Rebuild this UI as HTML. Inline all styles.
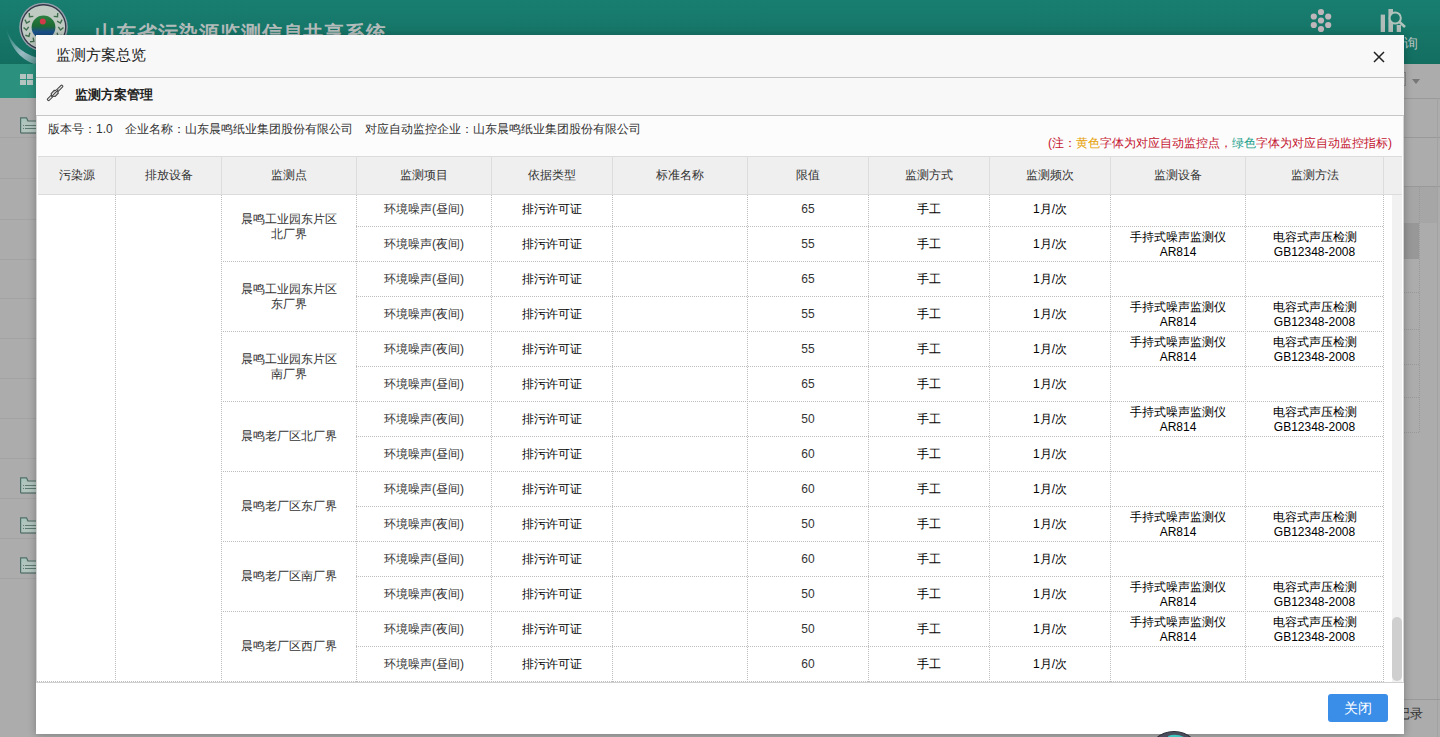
<!DOCTYPE html><html><head><meta charset="utf-8"><style>
*{margin:0;padding:0;box-sizing:border-box}
html,body{width:1440px;height:737px;overflow:hidden;background:#acacac;font-family:"Liberation Sans",sans-serif}
.a{position:absolute}
.hd{left:0;top:0;width:1440px;height:64px;background:linear-gradient(#187e70,#136e60)}
.nav{left:0;top:64px;width:700px;height:34px;background:#2c907e}
.nav2{left:700px;top:64px;width:740px;height:34px;background:#acacac}
.bgc{left:0;top:98px;width:1440px;height:639px;background:#acacac}
.modal{left:36px;top:35px;width:1368px;height:699px;background:#fff;box-shadow:0 1px 8px rgba(0,0,0,.28);overflow:hidden}
.mh{left:0;top:0;width:1368px;height:43px;background:#f8f8f8;border-bottom:1px solid #c6c6c6}
.mt{left:20px;top:10px;font-size:15px;color:#222;line-height:20px}
.close{left:1337px;top:16px;width:12px;height:12px}
.ph{left:0;top:43px;width:1368px;height:38px;background:#f8f8f8;border-bottom:1px solid #c6c6c6}
.pt{left:39px;top:52px;font-size:13px;font-weight:bold;color:#222;line-height:16px}
.info{left:12px;top:86px;font-size:12px;color:#333;line-height:16px;white-space:pre}
.note{left:1012px;top:100px;font-size:12px;color:#c41430;line-height:16px;white-space:nowrap}
.th{top:121px;height:38px;background:#efefef}
.cell{font-size:12px;color:#333;text-align:center;line-height:15px;display:flex;align-items:center;justify-content:center}
.vl{width:1px;background:repeating-linear-gradient(to bottom,#bdbdbd 0,#bdbdbd 1px,transparent 1px,transparent 2px)}
.hl{height:1px;background:repeating-linear-gradient(to right,#bdbdbd 0,#bdbdbd 1px,transparent 1px,transparent 2px)}
.btn{left:1292px;top:659px;width:60px;height:28px;background:#3a8ee8;border-radius:3px;color:#fff;font-size:14px;line-height:28px;text-align:center}
</style></head><body>
<div class="a hd"></div><div class="a nav"></div><div class="a nav2"></div><div class="a bgc"></div>
<svg class="a" style="left:0;top:20px" width="80" height="50" viewBox="0 0 80 50"><defs><linearGradient id="sw" x1="0" y1="0" x2="1" y2="1"><stop offset="0" stop-color="#b8d8e8" stop-opacity="0"/><stop offset=".55" stop-color="#c8d4e4" stop-opacity=".75"/><stop offset="1" stop-color="#e0d8e8" stop-opacity=".2"/></linearGradient></defs><path d="M6 8 Q14 34 46 40 Q40 43 34 44 Q12 36 6 8Z" fill="url(#sw)"/></svg>
<svg class="a" style="left:17px;top:0px" width="54" height="54" viewBox="0 0 54 54"><defs><linearGradient id="lg" x1="0" y1="0" x2="0" y2="1"><stop offset="0" stop-color="#2a8040"/><stop offset=".45" stop-color="#1c6a34"/><stop offset=".7" stop-color="#1a508e"/><stop offset="1" stop-color="#154a60"/></linearGradient></defs><circle cx="26.5" cy="27" r="24.3" fill="#9aa2ac"/><circle cx="26.5" cy="27" r="22.9" fill="#34384a"/><circle cx="26.5" cy="27" r="21.6" fill="#bfcac3"/><path d="M-2.6 -1.6 L0 1.2 L2.6 -1.6" fill="none" stroke="#3f6f4c" stroke-width="1.4" transform="translate(22.02 43.71) rotate(285.0)"/><path d="M-2.6 -1.6 L0 1.2 L2.6 -1.6" fill="none" stroke="#3f6f4c" stroke-width="1.4" transform="translate(30.98 43.71) rotate(75.0)"/><path d="M-2.6 -1.6 L0 1.2 L2.6 -1.6" fill="none" stroke="#3f6f4c" stroke-width="1.4" transform="translate(15.85 40.63) rotate(308.0)"/><path d="M-2.6 -1.6 L0 1.2 L2.6 -1.6" fill="none" stroke="#3f6f4c" stroke-width="1.4" transform="translate(37.15 40.63) rotate(52.0)"/><path d="M-2.6 -1.6 L0 1.2 L2.6 -1.6" fill="none" stroke="#3f6f4c" stroke-width="1.4" transform="translate(11.37 35.39) rotate(331.0)"/><path d="M-2.6 -1.6 L0 1.2 L2.6 -1.6" fill="none" stroke="#3f6f4c" stroke-width="1.4" transform="translate(41.63 35.39) rotate(29.0)"/><path d="M-2.6 -1.6 L0 1.2 L2.6 -1.6" fill="none" stroke="#3f6f4c" stroke-width="1.4" transform="translate(9.29 28.81) rotate(354.0)"/><path d="M-2.6 -1.6 L0 1.2 L2.6 -1.6" fill="none" stroke="#3f6f4c" stroke-width="1.4" transform="translate(43.71 28.81) rotate(6.0)"/><path d="M-2.6 -1.6 L0 1.2 L2.6 -1.6" fill="none" stroke="#3f6f4c" stroke-width="1.4" transform="translate(9.96 21.94) rotate(377.0)"/><path d="M-2.6 -1.6 L0 1.2 L2.6 -1.6" fill="none" stroke="#3f6f4c" stroke-width="1.4" transform="translate(43.04 21.94) rotate(-17.0)"/><path d="M-2.6 -1.6 L0 1.2 L2.6 -1.6" fill="none" stroke="#3f6f4c" stroke-width="1.4" transform="translate(13.25 15.88) rotate(400.0)"/><path d="M-2.6 -1.6 L0 1.2 L2.6 -1.6" fill="none" stroke="#3f6f4c" stroke-width="1.4" transform="translate(39.75 15.88) rotate(-40.0)"/><circle cx="26.5" cy="27.3" r="11.9" fill="url(#lg)"/><circle cx="25.8" cy="21.6" r="3" fill="#d23a4a"/></svg>
<div class="a" style="left:95px;top:20px;font-size:20px;font-weight:bold;letter-spacing:0.85px;color:#b4bcbb;line-height:26px;white-space:nowrap">山东省污染源监测信息共享系统</div>
<svg class="a" style="left:1313px;top:3px;overflow:visible" width="20" height="32" viewBox="0 0 20 32"><circle cx="8" cy="9" r="3.1" fill="#beb6ba"/><circle cx="8" cy="17.5" r="3.1" fill="#beb6ba"/><circle cx="8" cy="26" r="3.1" fill="#beb6ba"/><circle cx="0.8" cy="13.5" r="3.1" fill="#beb6ba"/><circle cx="15.2" cy="13.5" r="3.1" fill="#beb6ba"/><circle cx="0.8" cy="22" r="3.1" fill="#beb6ba"/><circle cx="15.2" cy="22" r="3.1" fill="#beb6ba"/></svg>
<svg class="a" style="left:1380px;top:6px" width="30" height="30" viewBox="0 0 30 30"><rect x="0.7" y="8.6" width="4.3" height="17.4" fill="#b0bcb8"/><rect x="8.4" y="3" width="4.6" height="23" fill="#b0bcb8"/><rect x="16.7" y="19" width="4.3" height="7" fill="#b0bcb8"/><circle cx="15.2" cy="12" r="5.6" fill="#177668" stroke="#b0c4bc" stroke-width="2"/><path d="M19.5 16 L25 21" stroke="#b0c4bc" stroke-width="2.6"/></svg>
<div class="a" style="left:1390px;top:35px;font-size:14px;color:#b8c4c0;line-height:16px">查询</div>
<div class="a" style="left:20px;top:74px;width:6px;height:5px;background:#b4c4c0"></div><div class="a" style="left:27px;top:74px;width:6px;height:5px;background:#b4c4c0"></div><div class="a" style="left:20px;top:80px;width:6px;height:5px;background:#b4c4c0"></div><div class="a" style="left:27px;top:80px;width:6px;height:5px;background:#b4c4c0"></div>
<div class="a" style="left:0;top:137px;width:40px;height:1px;background:#a3a3a3"></div>
<div class="a" style="left:0;top:178px;width:40px;height:1px;background:#a3a3a3"></div>
<div class="a" style="left:0;top:219px;width:40px;height:1px;background:#a3a3a3"></div>
<div class="a" style="left:0;top:259px;width:40px;height:1px;background:#a3a3a3"></div>
<div class="a" style="left:0;top:298px;width:40px;height:1px;background:#a3a3a3"></div>
<div class="a" style="left:0;top:338px;width:40px;height:1px;background:#a3a3a3"></div>
<div class="a" style="left:0;top:378px;width:40px;height:1px;background:#a3a3a3"></div>
<div class="a" style="left:0;top:418px;width:40px;height:1px;background:#a3a3a3"></div>
<div class="a" style="left:0;top:458px;width:40px;height:1px;background:#a3a3a3"></div>
<div class="a" style="left:0;top:498px;width:40px;height:1px;background:#a3a3a3"></div>
<div class="a" style="left:0;top:538px;width:40px;height:1px;background:#a3a3a3"></div>
<div class="a" style="left:0;top:578px;width:40px;height:1px;background:#a3a3a3"></div>
<svg class="a" style="left:20px;top:117px" width="18" height="17" viewBox="0 0 18 17"><rect x="0.6" y="1" width="6" height="4" fill="#a8c6bc"/><rect x="0.6" y="4.5" width="17.4" height="11.5" fill="#b2c4be"/><path d="M0.6 16 V0.8 H6.5 L8 4 H18" fill="none" stroke="#4f7068" stroke-width="1.2"/><path d="M0.6 16 H18" stroke="#4f6a64" stroke-width="1.2"/><path d="M3 8.5 H4 M5 8.5 H16 M3 11.5 H4 M5 11.5 H16" stroke="#5c7a72" stroke-width="1"/></svg>
<svg class="a" style="left:20px;top:477px" width="18" height="17" viewBox="0 0 18 17"><rect x="0.6" y="1" width="6" height="4" fill="#a8c6bc"/><rect x="0.6" y="4.5" width="17.4" height="11.5" fill="#b2c4be"/><path d="M0.6 16 V0.8 H6.5 L8 4 H18" fill="none" stroke="#4f7068" stroke-width="1.2"/><path d="M0.6 16 H18" stroke="#4f6a64" stroke-width="1.2"/><path d="M3 8.5 H4 M5 8.5 H16 M3 11.5 H4 M5 11.5 H16" stroke="#5c7a72" stroke-width="1"/></svg>
<svg class="a" style="left:20px;top:517px" width="18" height="17" viewBox="0 0 18 17"><rect x="0.6" y="1" width="6" height="4" fill="#a8c6bc"/><rect x="0.6" y="4.5" width="17.4" height="11.5" fill="#b2c4be"/><path d="M0.6 16 V0.8 H6.5 L8 4 H18" fill="none" stroke="#4f7068" stroke-width="1.2"/><path d="M0.6 16 H18" stroke="#4f6a64" stroke-width="1.2"/><path d="M3 8.5 H4 M5 8.5 H16 M3 11.5 H4 M5 11.5 H16" stroke="#5c7a72" stroke-width="1"/></svg>
<svg class="a" style="left:20px;top:557px" width="18" height="17" viewBox="0 0 18 17"><rect x="0.6" y="1" width="6" height="4" fill="#a8c6bc"/><rect x="0.6" y="4.5" width="17.4" height="11.5" fill="#b2c4be"/><path d="M0.6 16 V0.8 H6.5 L8 4 H18" fill="none" stroke="#4f7068" stroke-width="1.2"/><path d="M0.6 16 H18" stroke="#4f6a64" stroke-width="1.2"/><path d="M3 8.5 H4 M5 8.5 H16 M3 11.5 H4 M5 11.5 H16" stroke="#5c7a72" stroke-width="1"/></svg>
<div class="a" style="left:1404px;top:98px;width:36px;height:1px;background:#999"></div>
<div class="a" style="left:1404px;top:137px;width:36px;height:1px;background:#999"></div>
<div class="a" style="left:1404px;top:186px;width:36px;height:1px;background:#999"></div>
<div class="a" style="left:1404px;top:187px;width:33px;height:36px;background:#a6a6a6"></div>
<div class="a" style="left:1404px;top:223px;width:15px;height:36px;background:#989898"></div>
<div class="a" style="left:1419px;top:187px;width:1px;height:245px;background:repeating-linear-gradient(#999 0 1px,transparent 1px 2px)"></div>
<div class="a" style="left:1404px;top:292px;width:16px;height:1px;background:repeating-linear-gradient(to right,#999 0 1px,transparent 1px 2px)"></div>
<div class="a" style="left:1404px;top:329px;width:16px;height:1px;background:repeating-linear-gradient(to right,#999 0 1px,transparent 1px 2px)"></div>
<div class="a" style="left:1404px;top:364px;width:16px;height:1px;background:repeating-linear-gradient(to right,#999 0 1px,transparent 1px 2px)"></div>
<div class="a" style="left:1404px;top:397px;width:16px;height:1px;background:repeating-linear-gradient(to right,#999 0 1px,transparent 1px 2px)"></div>
<div class="a" style="left:1404px;top:432px;width:16px;height:1px;background:repeating-linear-gradient(to right,#999 0 1px,transparent 1px 2px)"></div>
<div class="a" style="left:1437px;top:98px;width:1px;height:640px;background:#a2a2a2"></div>
<div class="a" style="left:1404px;top:72px;width:2px;height:14px;border:1px solid #888;border-left:none"></div>
<div class="a" style="left:1412px;top:79px;width:0;height:0;border-left:4px solid transparent;border-right:4px solid transparent;border-top:5px solid #777"></div>
<div class="a" style="left:1404px;top:699px;width:36px;height:1px;background:#999"></div>
<div class="a" style="left:1397px;top:706px;font-size:13px;color:#333;line-height:15px">记录</div>
<div class="a modal">
<div class="a mh"></div><div class="a mt">监测方案总览</div>
<svg class="a close" viewBox="0 0 12 12"><path d="M1 1L11 11M11 1L1 11" stroke="#222" stroke-width="1.5"/></svg>
<div class="a" style="left:0;top:81px;width:1368px;height:40px;background:#fcfcfc"></div>
<div class="a ph"></div><div class="a pt">监测方案管理</div>
<svg class="a" style="left:10px;top:49px" width="20" height="20" viewBox="0 0 20 20"><path d="M2.6 15.4 L15.6 2.4" stroke="#4a4a4a" stroke-width="3.4" stroke-linecap="round"/><path d="M2.6 15.4 L15.6 2.4" stroke="#e8e8e8" stroke-width="1.3" stroke-linecap="round" stroke-dasharray="1 1"/><path d="M5.2 9.6 L8.2 6.4 L11.6 6.6 L12.2 9.2 L9.2 12.4 L5.8 12.2Z" fill="#ddd" stroke="#4a4a4a" stroke-width="1.2"/><path d="M5.4 12.6 L12.4 5.6" stroke="#4a4a4a" stroke-width="1.1"/><path d="M6 11 L11 6" stroke="#f0f0f0" stroke-width=".8" stroke-dasharray="1 1"/></svg>
<div class="a info">版本号：1.0</div><div class="a info" style="left:89px">企业名称：山东晨鸣纸业集团股份有限公司</div><div class="a info" style="left:329px">对应自动监控企业：山东晨鸣纸业集团股份有限公司</div>
<div class="a note">(注：<span style="color:#e6a000">黄色</span>字体为对应自动监控点，<span style="color:#1aa08a">绿色</span>字体为对应自动监控指标)</div>
<div class="a th" style="left:2px;width:1364px;top:121px;height:39px;border-top:1px solid #dcdcdc;border-bottom:1px solid #dcdcdc"></div>
<div class="a cell" style="left:2px;width:77px;top:122px;height:37px">污染源</div>
<div class="a cell" style="left:80px;width:105px;top:122px;height:37px">排放设备</div>
<div class="a cell" style="left:186px;width:134px;top:122px;height:37px">监测点</div>
<div class="a cell" style="left:321px;width:134px;top:122px;height:37px">监测项目</div>
<div class="a cell" style="left:456px;width:120px;top:122px;height:37px">依据类型</div>
<div class="a cell" style="left:577px;width:134px;top:122px;height:37px">标准名称</div>
<div class="a cell" style="left:712px;width:120px;top:122px;height:37px">限值</div>
<div class="a cell" style="left:833px;width:120px;top:122px;height:37px">监测方式</div>
<div class="a cell" style="left:954px;width:120px;top:122px;height:37px">监测频次</div>
<div class="a cell" style="left:1075px;width:134px;top:122px;height:37px">监测设备</div>
<div class="a cell" style="left:1210px;width:137px;top:122px;height:37px">监测方法</div>
<div class="a" style="left:79px;top:122px;width:1px;height:37px;background:#dddddd"></div>
<div class="a" style="left:185px;top:122px;width:1px;height:37px;background:#dddddd"></div>
<div class="a" style="left:320px;top:122px;width:1px;height:37px;background:#dddddd"></div>
<div class="a" style="left:455px;top:122px;width:1px;height:37px;background:#dddddd"></div>
<div class="a" style="left:576px;top:122px;width:1px;height:37px;background:#dddddd"></div>
<div class="a" style="left:711px;top:122px;width:1px;height:37px;background:#dddddd"></div>
<div class="a" style="left:832px;top:122px;width:1px;height:37px;background:#dddddd"></div>
<div class="a" style="left:953px;top:122px;width:1px;height:37px;background:#dddddd"></div>
<div class="a" style="left:1074px;top:122px;width:1px;height:37px;background:#dddddd"></div>
<div class="a" style="left:1209px;top:122px;width:1px;height:37px;background:#dddddd"></div>
<div class="a" style="left:1347px;top:122px;width:1px;height:37px;background:#dddddd"></div>
<div class="a" style="left:1px;top:160px;width:1355px;height:487px;overflow:hidden">
<div class="a vl" style="left:78px;top:0;height:487px"></div>
<div class="a vl" style="left:184px;top:0;height:487px"></div>
<div class="a vl" style="left:319px;top:0;height:487px"></div>
<div class="a vl" style="left:454px;top:0;height:487px"></div>
<div class="a vl" style="left:575px;top:0;height:487px"></div>
<div class="a vl" style="left:710px;top:0;height:487px"></div>
<div class="a vl" style="left:831px;top:0;height:487px"></div>
<div class="a vl" style="left:952px;top:0;height:487px"></div>
<div class="a vl" style="left:1073px;top:0;height:487px"></div>
<div class="a vl" style="left:1208px;top:0;height:487px"></div>
<div class="a vl" style="left:1346px;top:0;height:487px"></div>
<div class="a hl" style="left:319px;top:31px;width:1027px"></div>
<div class="a cell" style="left:320px;width:134px;top:-3px;height:34px">环境噪声(昼间)</div>
<div class="a cell" style="color:#000;left:455px;width:120px;top:-3px;height:34px">排污许可证</div>
<div class="a cell" style="left:576px;width:134px;top:-3px;height:34px"></div>
<div class="a cell" style="left:711px;width:120px;top:-3px;height:34px">65</div>
<div class="a cell" style="color:#000;left:832px;width:120px;top:-3px;height:34px">手工</div>
<div class="a cell" style="color:#000;left:953px;width:120px;top:-3px;height:34px">1月/次</div>
<div class="a cell" style="color:#000;left:1074px;width:134px;top:-3px;height:34px"></div>
<div class="a cell" style="color:#000;left:1209px;width:137px;top:-3px;height:34px"></div>
<div class="a cell" style="left:185px;width:134px;top:-3px;height:69px">晨鸣工业园东片区<br>北厂界</div>
<div class="a hl" style="left:184px;top:66px;width:1162px"></div>
<div class="a cell" style="left:320px;width:134px;top:32px;height:34px">环境噪声(夜间)</div>
<div class="a cell" style="color:#000;left:455px;width:120px;top:32px;height:34px">排污许可证</div>
<div class="a cell" style="left:576px;width:134px;top:32px;height:34px"></div>
<div class="a cell" style="left:711px;width:120px;top:32px;height:34px">55</div>
<div class="a cell" style="color:#000;left:832px;width:120px;top:32px;height:34px">手工</div>
<div class="a cell" style="color:#000;left:953px;width:120px;top:32px;height:34px">1月/次</div>
<div class="a cell" style="color:#000;padding-top:2px;left:1074px;width:134px;top:32px;height:34px">手持式噪声监测仪<br>AR814</div>
<div class="a cell" style="color:#000;padding-top:2px;left:1209px;width:137px;top:32px;height:34px">电容式声压检测<br>GB12348-2008</div>
<div class="a hl" style="left:319px;top:101px;width:1027px"></div>
<div class="a cell" style="left:320px;width:134px;top:67px;height:34px">环境噪声(昼间)</div>
<div class="a cell" style="color:#000;left:455px;width:120px;top:67px;height:34px">排污许可证</div>
<div class="a cell" style="left:576px;width:134px;top:67px;height:34px"></div>
<div class="a cell" style="left:711px;width:120px;top:67px;height:34px">65</div>
<div class="a cell" style="color:#000;left:832px;width:120px;top:67px;height:34px">手工</div>
<div class="a cell" style="color:#000;left:953px;width:120px;top:67px;height:34px">1月/次</div>
<div class="a cell" style="color:#000;left:1074px;width:134px;top:67px;height:34px"></div>
<div class="a cell" style="color:#000;left:1209px;width:137px;top:67px;height:34px"></div>
<div class="a cell" style="left:185px;width:134px;top:67px;height:69px">晨鸣工业园东片区<br>东厂界</div>
<div class="a hl" style="left:184px;top:136px;width:1162px"></div>
<div class="a cell" style="left:320px;width:134px;top:102px;height:34px">环境噪声(夜间)</div>
<div class="a cell" style="color:#000;left:455px;width:120px;top:102px;height:34px">排污许可证</div>
<div class="a cell" style="left:576px;width:134px;top:102px;height:34px"></div>
<div class="a cell" style="left:711px;width:120px;top:102px;height:34px">55</div>
<div class="a cell" style="color:#000;left:832px;width:120px;top:102px;height:34px">手工</div>
<div class="a cell" style="color:#000;left:953px;width:120px;top:102px;height:34px">1月/次</div>
<div class="a cell" style="color:#000;padding-top:2px;left:1074px;width:134px;top:102px;height:34px">手持式噪声监测仪<br>AR814</div>
<div class="a cell" style="color:#000;padding-top:2px;left:1209px;width:137px;top:102px;height:34px">电容式声压检测<br>GB12348-2008</div>
<div class="a hl" style="left:319px;top:171px;width:1027px"></div>
<div class="a cell" style="left:320px;width:134px;top:137px;height:34px">环境噪声(夜间)</div>
<div class="a cell" style="color:#000;left:455px;width:120px;top:137px;height:34px">排污许可证</div>
<div class="a cell" style="left:576px;width:134px;top:137px;height:34px"></div>
<div class="a cell" style="left:711px;width:120px;top:137px;height:34px">55</div>
<div class="a cell" style="color:#000;left:832px;width:120px;top:137px;height:34px">手工</div>
<div class="a cell" style="color:#000;left:953px;width:120px;top:137px;height:34px">1月/次</div>
<div class="a cell" style="color:#000;padding-top:2px;left:1074px;width:134px;top:137px;height:34px">手持式噪声监测仪<br>AR814</div>
<div class="a cell" style="color:#000;padding-top:2px;left:1209px;width:137px;top:137px;height:34px">电容式声压检测<br>GB12348-2008</div>
<div class="a cell" style="left:185px;width:134px;top:137px;height:69px">晨鸣工业园东片区<br>南厂界</div>
<div class="a hl" style="left:184px;top:206px;width:1162px"></div>
<div class="a cell" style="left:320px;width:134px;top:172px;height:34px">环境噪声(昼间)</div>
<div class="a cell" style="color:#000;left:455px;width:120px;top:172px;height:34px">排污许可证</div>
<div class="a cell" style="left:576px;width:134px;top:172px;height:34px"></div>
<div class="a cell" style="left:711px;width:120px;top:172px;height:34px">65</div>
<div class="a cell" style="color:#000;left:832px;width:120px;top:172px;height:34px">手工</div>
<div class="a cell" style="color:#000;left:953px;width:120px;top:172px;height:34px">1月/次</div>
<div class="a cell" style="color:#000;left:1074px;width:134px;top:172px;height:34px"></div>
<div class="a cell" style="color:#000;left:1209px;width:137px;top:172px;height:34px"></div>
<div class="a hl" style="left:319px;top:241px;width:1027px"></div>
<div class="a cell" style="left:320px;width:134px;top:207px;height:34px">环境噪声(夜间)</div>
<div class="a cell" style="color:#000;left:455px;width:120px;top:207px;height:34px">排污许可证</div>
<div class="a cell" style="left:576px;width:134px;top:207px;height:34px"></div>
<div class="a cell" style="left:711px;width:120px;top:207px;height:34px">50</div>
<div class="a cell" style="color:#000;left:832px;width:120px;top:207px;height:34px">手工</div>
<div class="a cell" style="color:#000;left:953px;width:120px;top:207px;height:34px">1月/次</div>
<div class="a cell" style="color:#000;padding-top:2px;left:1074px;width:134px;top:207px;height:34px">手持式噪声监测仪<br>AR814</div>
<div class="a cell" style="color:#000;padding-top:2px;left:1209px;width:137px;top:207px;height:34px">电容式声压检测<br>GB12348-2008</div>
<div class="a cell" style="left:185px;width:134px;top:207px;height:69px">晨鸣老厂区北厂界</div>
<div class="a hl" style="left:184px;top:276px;width:1162px"></div>
<div class="a cell" style="left:320px;width:134px;top:242px;height:34px">环境噪声(昼间)</div>
<div class="a cell" style="color:#000;left:455px;width:120px;top:242px;height:34px">排污许可证</div>
<div class="a cell" style="left:576px;width:134px;top:242px;height:34px"></div>
<div class="a cell" style="left:711px;width:120px;top:242px;height:34px">60</div>
<div class="a cell" style="color:#000;left:832px;width:120px;top:242px;height:34px">手工</div>
<div class="a cell" style="color:#000;left:953px;width:120px;top:242px;height:34px">1月/次</div>
<div class="a cell" style="color:#000;left:1074px;width:134px;top:242px;height:34px"></div>
<div class="a cell" style="color:#000;left:1209px;width:137px;top:242px;height:34px"></div>
<div class="a hl" style="left:319px;top:311px;width:1027px"></div>
<div class="a cell" style="left:320px;width:134px;top:277px;height:34px">环境噪声(昼间)</div>
<div class="a cell" style="color:#000;left:455px;width:120px;top:277px;height:34px">排污许可证</div>
<div class="a cell" style="left:576px;width:134px;top:277px;height:34px"></div>
<div class="a cell" style="left:711px;width:120px;top:277px;height:34px">60</div>
<div class="a cell" style="color:#000;left:832px;width:120px;top:277px;height:34px">手工</div>
<div class="a cell" style="color:#000;left:953px;width:120px;top:277px;height:34px">1月/次</div>
<div class="a cell" style="color:#000;left:1074px;width:134px;top:277px;height:34px"></div>
<div class="a cell" style="color:#000;left:1209px;width:137px;top:277px;height:34px"></div>
<div class="a cell" style="left:185px;width:134px;top:277px;height:69px">晨鸣老厂区东厂界</div>
<div class="a hl" style="left:184px;top:346px;width:1162px"></div>
<div class="a cell" style="left:320px;width:134px;top:312px;height:34px">环境噪声(夜间)</div>
<div class="a cell" style="color:#000;left:455px;width:120px;top:312px;height:34px">排污许可证</div>
<div class="a cell" style="left:576px;width:134px;top:312px;height:34px"></div>
<div class="a cell" style="left:711px;width:120px;top:312px;height:34px">50</div>
<div class="a cell" style="color:#000;left:832px;width:120px;top:312px;height:34px">手工</div>
<div class="a cell" style="color:#000;left:953px;width:120px;top:312px;height:34px">1月/次</div>
<div class="a cell" style="color:#000;padding-top:2px;left:1074px;width:134px;top:312px;height:34px">手持式噪声监测仪<br>AR814</div>
<div class="a cell" style="color:#000;padding-top:2px;left:1209px;width:137px;top:312px;height:34px">电容式声压检测<br>GB12348-2008</div>
<div class="a hl" style="left:319px;top:381px;width:1027px"></div>
<div class="a cell" style="left:320px;width:134px;top:347px;height:34px">环境噪声(昼间)</div>
<div class="a cell" style="color:#000;left:455px;width:120px;top:347px;height:34px">排污许可证</div>
<div class="a cell" style="left:576px;width:134px;top:347px;height:34px"></div>
<div class="a cell" style="left:711px;width:120px;top:347px;height:34px">60</div>
<div class="a cell" style="color:#000;left:832px;width:120px;top:347px;height:34px">手工</div>
<div class="a cell" style="color:#000;left:953px;width:120px;top:347px;height:34px">1月/次</div>
<div class="a cell" style="color:#000;left:1074px;width:134px;top:347px;height:34px"></div>
<div class="a cell" style="color:#000;left:1209px;width:137px;top:347px;height:34px"></div>
<div class="a cell" style="left:185px;width:134px;top:347px;height:69px">晨鸣老厂区南厂界</div>
<div class="a hl" style="left:184px;top:416px;width:1162px"></div>
<div class="a cell" style="left:320px;width:134px;top:382px;height:34px">环境噪声(夜间)</div>
<div class="a cell" style="color:#000;left:455px;width:120px;top:382px;height:34px">排污许可证</div>
<div class="a cell" style="left:576px;width:134px;top:382px;height:34px"></div>
<div class="a cell" style="left:711px;width:120px;top:382px;height:34px">50</div>
<div class="a cell" style="color:#000;left:832px;width:120px;top:382px;height:34px">手工</div>
<div class="a cell" style="color:#000;left:953px;width:120px;top:382px;height:34px">1月/次</div>
<div class="a cell" style="color:#000;padding-top:2px;left:1074px;width:134px;top:382px;height:34px">手持式噪声监测仪<br>AR814</div>
<div class="a cell" style="color:#000;padding-top:2px;left:1209px;width:137px;top:382px;height:34px">电容式声压检测<br>GB12348-2008</div>
<div class="a hl" style="left:319px;top:451px;width:1027px"></div>
<div class="a cell" style="left:320px;width:134px;top:417px;height:34px">环境噪声(夜间)</div>
<div class="a cell" style="color:#000;left:455px;width:120px;top:417px;height:34px">排污许可证</div>
<div class="a cell" style="left:576px;width:134px;top:417px;height:34px"></div>
<div class="a cell" style="left:711px;width:120px;top:417px;height:34px">50</div>
<div class="a cell" style="color:#000;left:832px;width:120px;top:417px;height:34px">手工</div>
<div class="a cell" style="color:#000;left:953px;width:120px;top:417px;height:34px">1月/次</div>
<div class="a cell" style="color:#000;padding-top:2px;left:1074px;width:134px;top:417px;height:34px">手持式噪声监测仪<br>AR814</div>
<div class="a cell" style="color:#000;padding-top:2px;left:1209px;width:137px;top:417px;height:34px">电容式声压检测<br>GB12348-2008</div>
<div class="a cell" style="left:185px;width:134px;top:417px;height:69px">晨鸣老厂区西厂界</div>
<div class="a hl" style="left:184px;top:486px;width:1162px"></div>
<div class="a cell" style="left:320px;width:134px;top:452px;height:34px">环境噪声(昼间)</div>
<div class="a cell" style="color:#000;left:455px;width:120px;top:452px;height:34px">排污许可证</div>
<div class="a cell" style="left:576px;width:134px;top:452px;height:34px"></div>
<div class="a cell" style="left:711px;width:120px;top:452px;height:34px">60</div>
<div class="a cell" style="color:#000;left:832px;width:120px;top:452px;height:34px">手工</div>
<div class="a cell" style="color:#000;left:953px;width:120px;top:452px;height:34px">1月/次</div>
<div class="a cell" style="color:#000;left:1074px;width:134px;top:452px;height:34px"></div>
<div class="a cell" style="color:#000;left:1209px;width:137px;top:452px;height:34px"></div>
<div class="a hl" style="left:0;top:486px;width:1346px"></div>
</div>
<div class="a" style="left:0;top:647px;width:1368px;height:1px;background:#d0d0d0"></div>
<div class="a" style="left:1356px;top:160px;width:10px;height:487px;background:#f1f1f1"></div>
<div class="a" style="left:1356px;top:582px;width:10px;height:64px;background:#cfcfcf;border-radius:5px"></div>
<div class="a btn">关闭</div>
<div class="a" style="left:0;top:81px;width:1px;height:567px;background:#d4d4d4"></div><div class="a" style="left:1367px;top:81px;width:1px;height:567px;background:#d4d4d4"></div>
</div>
<svg class="a" style="left:1144px;top:730px" width="60" height="8" viewBox="0 0 60 8"><circle cx="30" cy="28.5" r="27" fill="#4a4e5c" stroke="#2a2e38" stroke-width="1.2"/><path d="M24 6 Q32 3 40 7 L38 9 Q31 6 25 9Z" fill="#3ec8c0"/></svg>
</body></html>
